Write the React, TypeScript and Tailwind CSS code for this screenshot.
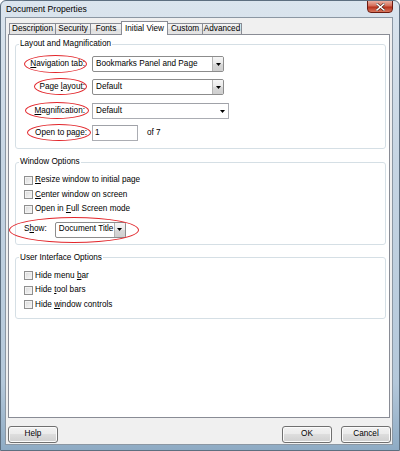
import React from "react";

const font = "font-['Liberation_Sans',Arial,sans-serif]";

function Arrow() {
  return (
    <svg width="5" height="3" viewBox="0 0 5 3" className="block">
      <path d="M0 0H5L2.5 3Z" fill="#000" />
    </svg>
  );
}

function Ellipse({ className }: { className: string }) {
  return (
    <span
      className={
        "pointer-events-none absolute rounded-[50%] border-[1.5px] border-[#e2262b] " +
        className
      }
    />
  );
}

function DropList({ text, className }: { text: string; className: string }) {
  return (
    <div
      className={
        "flex h-[16px] items-stretch rounded-[2px] border border-[#8c8c8c] bg-white " +
        className
      }
    >
      <div className="flex flex-1 items-center pl-[3px] leading-none">{text}</div>
      <div className="flex w-[11px] items-center justify-center rounded-r-[1px] border-l border-[#b5b5b5] bg-[linear-gradient(#f6f6f6,#e8e8e8_50%,#d8d8d8_51%,#cfcfcf)]">
        <Arrow />
      </div>
    </div>
  );
}

function Check({ children }: { children: React.ReactNode }) {
  return (
    <div className="flex h-[14.5px] items-center pl-[8px]">
      <span className="h-[9px] w-[9px] border border-[#8f8f8f] bg-[linear-gradient(135deg,#d8d8d8,#f9f9f9)] shadow-[inset_0_0_0_1px_#f2f2f2]" />
      <span className="ml-[2px] leading-none">{children}</span>
    </div>
  );
}

function Tab({ label, className }: { label: string; className: string }) {
  return (
    <div
      className={
        "-ml-px flex h-[11px] items-center justify-center border border-b-0 border-[#898c95] bg-[linear-gradient(#f3f3f3,#ebebeb_50%,#dedede_51%,#e5e5e5)] leading-none " +
        className
      }
    >
      {label}
    </div>
  );
}

function Btn({ label }: { label: string }) {
  return (
    <button className="h-[17px] w-[50px] rounded-[3px] border border-[#707070] bg-[linear-gradient(#f2f2f2,#ebebeb_45%,#dddddd_50%,#cfcfcf)] leading-none text-black shadow-[inset_0_0_0_1px_#fbfbfb]">
      {label}
    </button>
  );
}

export default function App() {
  return (
    <div
      className={
        "relative h-[451px] w-[400px] overflow-hidden rounded-t-[6px] border border-[#5d6f80] bg-[linear-gradient(180deg,#dbe5ee_0%,#c6d5e3_35%,#b4c8da_85%,#8eabc4_100%)] text-[8.2px] text-black " +
        font
      }
    >
      {/* title bar */}
      <div className="relative flex h-[16px] items-center pl-[5px]">
        <span className="text-[8.6px] leading-none text-black">Document Properties</span>
        <div className="absolute right-[6px] top-[-1px] flex h-[13px] w-[26px] items-center justify-center rounded-b-[4px] border border-[#6b1b10] bg-[linear-gradient(#eab0a2,#d46c57_45%,#b7311b_55%,#d9785f)]">
          <svg width="9" height="8" viewBox="0 0 9 8">
            <path d="M1 1L8 7M8 1L1 7" stroke="#3a1008" strokeWidth="2.6" strokeLinecap="square" />
            <path d="M1 1L8 7M8 1L1 7" stroke="#ffffff" strokeWidth="1.5" strokeLinecap="square" />
          </svg>
        </div>
      </div>

      {/* client */}
      <div className="ml-[4px] flex h-[428px] w-[388px] flex-col border border-[#8b97a3] bg-[#f0f0f0]">
        {/* tabs */}
        <div className="flex h-[16px] items-end pl-[4px]">
          <Tab label="Description" className="w-[47px]" />
          <Tab label="Security" className="w-[36px]" />
          <Tab label="Fonts" className="w-[32px]" />
          <div className="relative z-10 -mb-px -ml-px flex h-[14px] w-[47px] items-start justify-center border border-b-0 border-[#898c95] bg-white pt-[3px] leading-none">
            Initial View
          </div>
          <Tab label="Custom" className="w-[36px]" />
          <Tab label="Advanced" className="w-[40px]" />
        </div>

        {/* panel */}
        <div className="mx-[2px] flex flex-1 flex-col border border-[#898c95] bg-white pt-[4px]">
          {/* Layout and Magnification */}
          <fieldset className="ml-[6px] mr-[3px] rounded-[3px] border border-[#d5dfe5] pb-[7px]">
            <legend className="ml-[3px] px-[1px] leading-[10px]">Layout and Magnification</legend>
            <div className="relative mt-[7px] flex h-[16px] items-center">
              <Ellipse className="left-[8px] top-[-1px] h-[18px] w-[63px]" />
              <div className="w-[71px] pr-[2px] text-right leading-none">
                <span className="underline underline-offset-1">N</span>avigation tab:
              </div>
              <DropList text="Bookmarks Panel and Page" className="ml-[5px] w-[132px]" />
            </div>
            <div className="relative mt-[7px] flex h-[16px] items-center">
              <Ellipse className="left-[18px] top-[-1px] h-[17px] w-[53px]" />
              <div className="w-[71px] pr-[2px] text-right leading-none">
                Page <span className="underline underline-offset-1">l</span>ayout:
              </div>
              <DropList text="Default" className="ml-[5px] w-[132px]" />
            </div>
            <div className="relative mt-[8px] flex h-[16px] items-center">
              <Ellipse className="left-[9px] top-[-1px] h-[17px] w-[64px]" />
              <div className="w-[71px] pr-[2px] text-right leading-none">
                <span className="underline underline-offset-1">M</span>agnification:
              </div>
              <div className="ml-[5px] flex h-[16px] w-[137px] items-center border border-[#abadb3] border-t-[#a0a2a8] bg-white pl-[3px] pr-[3px] leading-none">
                <span className="flex-1">Default</span>
                <Arrow />
              </div>
            </div>
            <div className="relative mt-[6px] flex h-[16px] items-center">
              <Ellipse className="left-[11px] top-[-1px] h-[17px] w-[64px]" />
              <div className="w-[71px] pr-[0px] text-right leading-none">
                Open to pa<span className="underline underline-offset-1">g</span>e:
              </div>
              <div className="ml-[5px] flex h-[16px] w-[46px] items-center border border-[#abadb3] border-t-[#a0a2a8] bg-white pl-[2px] leading-none">
                1
              </div>
              <span className="ml-[9px] leading-none">of 7</span>
            </div>
          </fieldset>

          {/* Window Options */}
          <fieldset className="ml-[6px] mr-[3px] mt-[8px] rounded-[3px] border border-[#d5dfe5] pb-[6px]">
            <legend className="ml-[3px] px-[1px] leading-[10px]">Window Options</legend>
            <div className="mt-[6px]">
              <Check>
                <span className="underline underline-offset-1">R</span>esize window to initial page
              </Check>
              <Check>
                <span className="underline underline-offset-1">C</span>enter window on screen
              </Check>
              <Check>
                Open in <span className="underline underline-offset-1">F</span>ull Screen mode
              </Check>
            </div>
            <div className="relative mt-[5px] flex h-[16px] items-center pl-[8px]">
              <Ellipse className="left-[-7px] top-[-5px] h-[26px] w-[130px]" />
              <span className="leading-none">
                S<span className="underline underline-offset-1">h</span>ow:
              </span>
              <DropList text="Document Title" className="ml-[8px] w-[71px]" />
            </div>
          </fieldset>

          {/* User Interface Options */}
          <fieldset className="ml-[6px] mr-[3px] mt-[8px] rounded-[3px] border border-[#d5dfe5] pb-[6px]">
            <legend className="ml-[3px] px-[1px] leading-[10px]">User Interface Options</legend>
            <div className="mt-[6px]">
              <Check>
                Hide menu <span className="underline underline-offset-1">b</span>ar
              </Check>
              <Check>
                Hide <span className="underline underline-offset-1">t</span>ool bars
              </Check>
              <Check>
                Hide <span className="underline underline-offset-1">w</span>indow controls
              </Check>
            </div>
          </fieldset>
        </div>

        {/* buttons */}
        <div className="mb-[1px] ml-[2px] mr-[1px] mt-[8px] flex items-center">
          <Btn label="Help" />
          <div className="flex-1" />
          <Btn label="OK" />
          <div className="w-[9px]" />
          <Btn label="Cancel" />
        </div>
      </div>
    </div>
  );
}
